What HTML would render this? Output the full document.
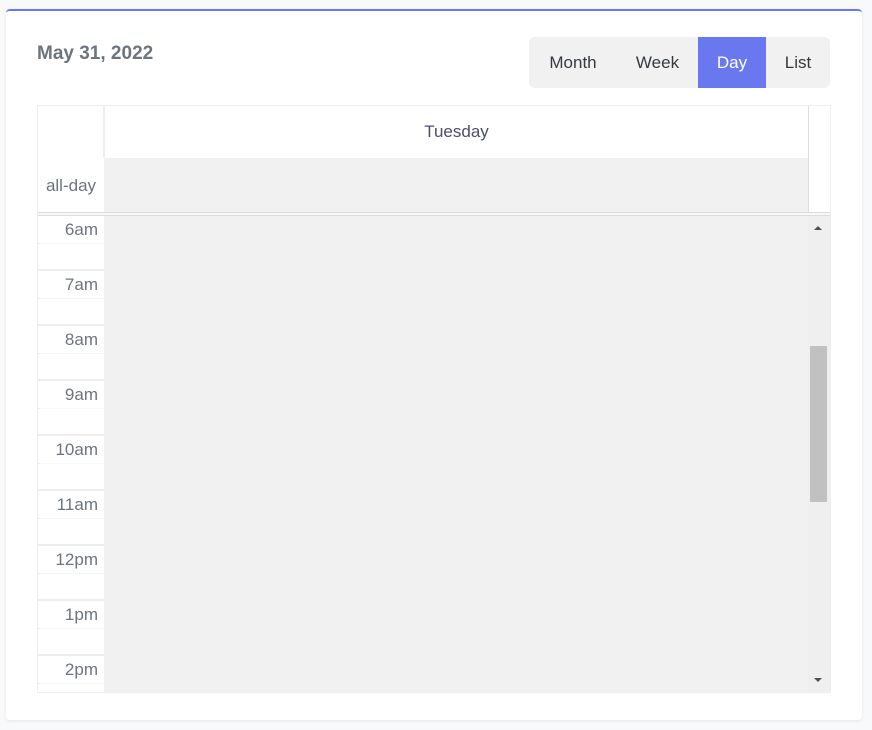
<!DOCTYPE html>
<html><head><style>
body{margin:0;width:872px;height:730px;background:#f8f9fa;font-family:"Liberation Sans",sans-serif;position:relative;overflow:hidden}
.card{position:absolute;left:6px;top:9px;width:856px;height:709px;background:#fff;border-top:2px solid #6a78f0;border-radius:4px;box-shadow:0 1px 3px rgba(0,0,0,.08)}
.a{position:absolute}
.title{left:37px;top:43px;font-size:19px;font-weight:bold;color:#6c757d}
.btns{left:529px;top:37px;width:301px;height:51px;background:#f1f1f1;border-radius:6px}
.b{position:absolute;top:0;height:51px;line-height:51px;font-size:17px;color:#343a40;text-align:center}
.lbl{position:absolute;right:774px;font-size:17px;color:#6c757d;text-align:right}
</style></head><body>
<div class="card"></div>
<div class="a title">May 31, 2022</div>
<div class="a btns">
<div class="b" style="left:0;width:88px">Month</div>
<div class="b" style="left:88px;width:81px">Week</div>
<div class="b" style="left:169px;width:68px;background:#6a78f0;color:#fff">Day</div>
<div class="b" style="left:237px;width:64px">List</div>
</div>
<div class="a" style="left:37px;top:105px;width:792px;height:586px;border:1px solid #eee;background:#fff"></div>
<div class="a" style="left:103px;top:106px;width:2px;height:52px;background:#eee"></div>
<div class="a" style="left:808px;top:106px;width:1px;height:106px;background:#ddd"></div>
<div class="a" style="left:105px;top:106px;width:703px;height:52px;line-height:52px;text-align:center;font-size:17px;color:#4a4f6a">Tuesday</div>
<div class="a" style="left:104px;top:158px;width:704px;height:54px;background:#f1f1f1"></div>
<div class="a" style="left:38px;top:158px;width:66px;height:54px;line-height:56px;text-align:center;font-size:17px;color:#6c757d">all-day</div>
<div class="a" style="left:38px;top:212px;width:792px;height:4px;border-top:1px solid #ddd;border-bottom:1px solid #ddd;background:#f8f8f8;box-sizing:border-box"></div>
<div class="a" style="left:104px;top:216px;width:726px;height:476px;background:#f1f1f1"></div>
<div class="a" style="left:808px;top:216px;width:22px;height:476px;background:#efefef"></div>
<div class="a" style="left:810px;top:346px;width:17px;height:156px;background:#c1c1c1"></div>
<div class="a" style="left:814px;top:226px;width:0;height:0;border-left:4px solid transparent;border-right:4px solid transparent;border-bottom:4px solid #505050"></div>
<div class="a" style="left:814px;top:678px;width:0;height:0;border-left:4px solid transparent;border-right:4px solid transparent;border-top:4px solid #505050"></div>
<div id="ax"></div>
<script>
var l=["6am","7am","8am","9am","10am","11am","12pm","1pm","2pm"],h="";
for(var i=0;i<l.length;i++){var t=216+i*55;
h+='<div class="lbl" style="top:'+(t+4)+'px">'+l[i]+'</div>';
h+='<div class="a" style="left:38px;top:'+(t+27)+'px;width:66px;border-top:1px dotted #eee"></div>';
if(i>0)h+='<div class="a" style="left:38px;top:'+(t-2)+'px;width:66px;height:2px;background:#eee"></div>';}
document.getElementById("ax").innerHTML=h;
</script>
</body></html>
